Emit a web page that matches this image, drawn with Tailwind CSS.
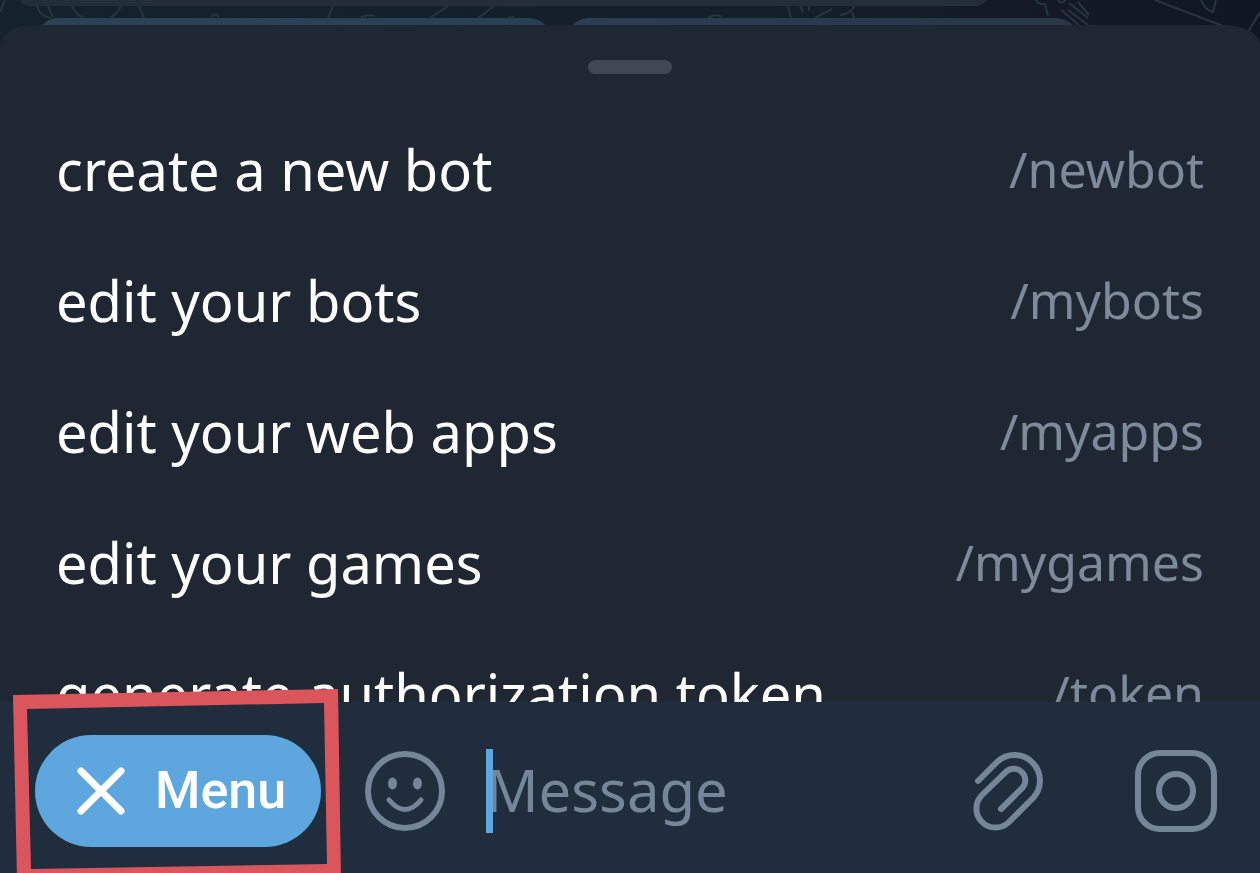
<!DOCTYPE html>
<html lang="en">
<head>
    <meta charset="UTF-8">
    <meta name="viewport" content="width=device-width, initial-scale=1.0">
    <title>Bot Commands</title>
    <script src="https://cdn.jsdelivr.net/npm/@tailwindcss/browser@4"></script>
</head>
<body class="relative flex h-screen flex-col overflow-hidden bg-[#14202c] font-['Noto_Sans',sans-serif]">
    <!-- Chat behind the sheet -->
    <svg class="absolute top-0 left-0 h-16 w-full" viewBox="0 0 1260 64" preserveAspectRatio="none" aria-hidden="true">
        <defs>
            <linearGradient id="wall" x1="0" x2="1">
                <stop offset="0" stop-color="#14222e"/>
                <stop offset="0.6" stop-color="#151e2b"/>
                <stop offset="1" stop-color="#111722"/>
            </linearGradient>
            <linearGradient id="keys" gradientUnits="userSpaceOnUse" x1="40" x2="1075">
                <stop offset="0" stop-color="#2e4256"/>
                <stop offset="0.25" stop-color="#2c4059"/>
                <stop offset="0.45" stop-color="#28414f"/>
                <stop offset="0.6" stop-color="#2b3c4e"/>
                <stop offset="1" stop-color="#293747"/>
            </linearGradient>
        </defs>
        <rect width="1260" height="64" fill="url(#wall)"/>
        <g fill="none" stroke="#273541" stroke-width="2">
            <path d="M5 0 0 12M37 6q2 10 14 12M48 6l5 11M72 6q4 9 12 12M121 6q-4 8-10 11M139 6l5 12M211 17q4-5 8 0M333 6l-5 12M361 17q8-3 14-1"/>
            <path d="M448 6 431 17M494 6 478 18M508 18l6-1M708 18q8-5 14-1M788 6l3 12M800 6l3 6M809 6v5M832 9l-17 9M855 4q-3 10-15 11M852 12l2 6"/>
            <path d="M1036 0q2 5 9 4l3 12M1058 0q3 5 8 0M1061 10l18 15M1068 10l20 15M1069 3l19 15M1078 2l11 13M1155 0l68 26M1201 0q4 10 12 12l3-12M1260 12l-12 20"/>
        </g>
        <path d="M20 0H987q-6 6-12 6H28q-6 0-8-6z" fill="#232e39"/>
        <path d="M42 26q6-8 16-8H526q14 0 20 8zM572 26q7-8 16-8H1054q12 0 20 8z" fill="url(#keys)"/>
    </svg>

    <!-- Commands sheet -->
    <main class="relative mt-[25px] flex min-h-0 flex-1 flex-col overflow-hidden rounded-t-[36px_20px] bg-[#1e2732]">
        <div class="mx-auto mt-[35px] mb-[29px] h-[14px] w-[84px] shrink-0 rounded-full bg-[#424853]"></div>
        <ul class="text-[56px] leading-[80px] text-white">
            <li><a href="#newbot" class="flex h-[131px] items-center justify-between px-14"><span>create a new bot</span><span class="text-[50px] text-[#7c8a99]">/newbot</span></a></li>
            <li><a href="#mybots" class="flex h-[131px] items-center justify-between px-14"><span>edit your bots</span><span class="text-[50px] text-[#7c8a99]">/mybots</span></a></li>
            <li><a href="#myapps" class="flex h-[131px] items-center justify-between px-14"><span>edit your web apps</span><span class="text-[50px] text-[#7c8a99]">/myapps</span></a></li>
            <li><a href="#mygames" class="flex h-[131px] items-center justify-between px-14"><span>edit your games</span><span class="text-[50px] text-[#7c8a99]">/mygames</span></a></li>
            <li><a href="#token" class="flex h-[131px] items-center justify-between px-14"><span>generate authorization token</span><span class="text-[50px] text-[#7c8a99]">/token</span></a></li>
        </ul>
    </main>

    <!-- Message bar -->
    <footer class="relative flex shrink-0 items-center bg-[#1f2d3d] pt-[33px] pr-[42px] pb-[26px] pl-[35px]">
        <button type="button" class="flex h-28 w-[286px] shrink-0 items-center rounded-full bg-[#5ea6de] pl-[42px] font-[Roboto,sans-serif] text-[52px] font-medium text-white">
            <svg class="mr-[30px] size-12 shrink-0" viewBox="0 0 48 48" fill="none" stroke="currentColor" stroke-width="7" stroke-linecap="round" aria-hidden="true">
                <path d="M4 4l40 40M44 4 4 44"/>
            </svg>
            Menu
        </button>

        <button type="button" aria-label="Emoji" class="ml-[42px] shrink-0 text-[#748698]">
            <svg class="size-[84px]" viewBox="0 0 84 84" fill="none" stroke="currentColor" stroke-width="6" stroke-linecap="round" aria-hidden="true">
                <circle cx="42" cy="42" r="37"/>
                <path d="M26 51q16 19 32 0" stroke-width="5"/>
                <ellipse cx="29.500" cy="34.500" rx="4.500" ry="6" fill="currentColor" stroke="none"/>
                <ellipse cx="54.500" cy="34.500" rx="4.500" ry="6" fill="currentColor" stroke="none"/>
            </svg>
        </button>

        <div class="relative ml-[39px] min-w-0 flex-1">
            <input type="text" aria-label="Message" placeholder="Message" class="block h-[84px] w-full bg-transparent pb-1 text-[58px] text-white outline-none placeholder:text-[#748698]">
            <span class="absolute top-0 left-0 h-[84px] w-[7px] bg-[#5ea6de]"></span>
        </div>

        <button type="button" aria-label="Attach file" class="shrink-0 text-[#748698]">
            <svg class="size-[84px]" viewBox="0 0 84 84" fill="none" stroke="currentColor" stroke-width="6" stroke-linecap="round" stroke-linejoin="round" aria-hidden="true">
                <path d="M12 32 31.500 12.500A25.500 25.500 0 0 1 67.500 48.500L43 73A19 19 0 0 1 16 46L40.400 22.400A11.500 11.500 0 0 1 56.600 38.600L35 60"/>
            </svg>
        </button>

        <button type="button" aria-label="Record video" class="ml-[84px] shrink-0 text-[#748698]">
            <svg class="size-[84px]" viewBox="0 0 84 84" fill="none" stroke="currentColor" stroke-width="6" aria-hidden="true">
                <rect x="4" y="4" width="76" height="76" rx="22"/>
                <circle cx="42" cy="42" r="17"/>
            </svg>
        </button>
    </footer>

    <!-- Highlight around the menu button -->
    <svg class="pointer-events-none absolute bottom-0 left-0 h-[190px] w-[350px]" viewBox="0 683 350 190" aria-hidden="true">
        <path fill="#db565c" fill-rule="evenodd" d="M13 695 338 689 341 880 17 880zM27 709 324 703 327 864 31 869z"/>
    </svg>
</body>
</html>
